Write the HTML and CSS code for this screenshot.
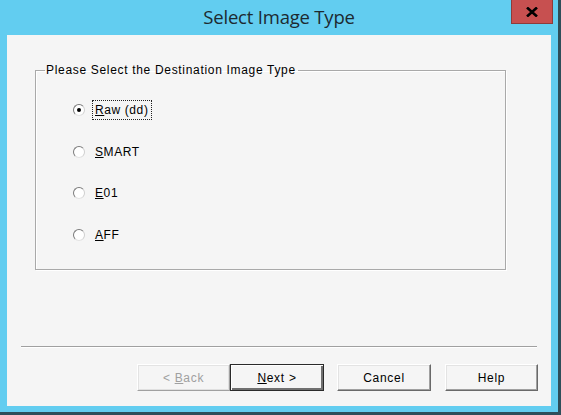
FILE: index.html
```html
<!DOCTYPE html>
<html>
<head>
<meta charset="utf-8">
<link rel="stylesheet" href="styles.css">
</head>
<body>
<div class="window">
  <div class="titlebar">
    <div class="title-spacer"></div>
    <div class="title">Select Image Type</div>
    <div class="title-right"><div class="close">
      <svg width="12" height="10" viewBox="0 0 12 10"><path d="M1 0.5 L11 9.5 M11 0.5 L1 9.5" stroke="#000" stroke-width="2.6"/></svg>
    </div></div>
  </div>
  <div class="client">
    <fieldset class="group">
      <legend class="legend">Please Select the Destination Image Type</legend>
      <div class="options">
        <div class="option"><span class="radio checked"></span><span class="label focus"><u>R</u>aw (dd)</span></div>
        <div class="option"><span class="radio"></span><span class="label"><u>S</u>MART</span></div>
        <div class="option"><span class="radio"></span><span class="label"><u>E</u>01</span></div>
        <div class="option"><span class="radio"></span><span class="label"><u>A</u>FF</span></div>
      </div>
    </fieldset>
    <div class="fill"></div>
    <div class="separator"></div>
    <div class="buttons">
      <div class="btn disabled"><span>&lt; <u>B</u>ack</span></div>
      <div class="btn default"><span><u>N</u>ext &gt;</span></div>
      <div class="btn cancel"><span>Cancel</span></div>
      <div class="btn help"><span>Help</span></div>
    </div>
  </div>
</div>
</body>
</html>
```
FILE: styles.css
```css
html, body {
  margin: 0;
  padding: 0;
}
body {
  width: 561px;
  height: 415px;
  overflow: hidden;
  font-family: "Liberation Sans", Arial, sans-serif;
}
.window {
  box-sizing: border-box;
  width: 561px;
  height: 415px;
  background: #62cdf0;
  border-right: 3px solid #2e4e5a;
  border-bottom: 3px solid #2e4e5a;
  display: flex;
  flex-direction: column;
}
.titlebar {
  height: 35px;
  display: grid;
  grid-template-columns: 1fr auto 1fr;
  align-items: start;
}
.title {
  font-family: "Open Sans", "Noto Sans", sans-serif;
  font-size: 18.5px;
  color: #1d2a30;
  line-height: 24px;
  padding-top: 5px;
  letter-spacing: -0.2px;
  padding-left: 0;
}
.title-right {
  display: flex;
  justify-content: flex-end;
  padding-right: 5px;
}
.close {
  box-sizing: border-box;
  width: 42px;
  height: 24px;
  background: #c75050;
  border: 1px solid #8e3b3b;
  border-top: none;
  display: flex;
  align-items: center;
  justify-content: center;
}
.client {
  margin: 0 7px 0 7px;
  height: 371px;
  background: #f5f5f5;
  display: flex;
  flex-direction: column;
  font-size: 12px;
  color: #000;
}
.group {
  box-sizing: border-box;
  margin: 28px 0 0 28px;
  width: 471px;
  height: 207px;
  padding: 0;
  border: 1px solid #a9a9a9;
  box-shadow: inset 1px 1px 0 #fff, 1px 1px 0 #fff;
  min-inline-size: 0;
}
.legend {
  margin-left: 9px;
  padding: 0 2px 0 1px;
  line-height: 14px;
  letter-spacing: 0.68px;
}
.options {
  display: flex;
  flex-direction: column;
  gap: 23.5px;
  padding: 24px 0 0 37px;
}
.option {
  display: flex;
  align-items: center;
  height: 18px;
}
.radio {
  box-sizing: border-box;
  width: 12px;
  height: 12px;
  border-radius: 50%;
  border: 1px solid;
  border-color: #7a7a7a #cfcfcf #e2e2e2 #7a7a7a;
  background: #fff;
  display: flex;
  align-items: center;
  justify-content: center;
  margin-right: 8px;
}
.radio.checked::after {
  content: "";
  width: 4px;
  height: 4px;
  border-radius: 50%;
  background: #000;
}
.label {
  line-height: 16px;
  padding: 0 2px;
  letter-spacing: 0.6px;
}
.label.focus {
  outline: 1px dotted #222;
  padding: 1px 2px;
}
.fill {
  flex: 1;
}
.separator {
  margin: 0 14px;
  height: 1px;
  background: #a0a0a0;
  border-bottom: 1px solid #fff;
}
.buttons {
  display: flex;
  justify-content: flex-end;
  padding: 16px 13px 15px 0;
}
.btn {
  box-sizing: border-box;
  width: 94px;
  height: 27px;
  display: flex;
  align-items: center;
  justify-content: center;
  background: #f5f5f5;
  border: 1px solid;
  border-color: #fff #696969 #696969 #fff;
  box-shadow: inset -1px -1px 0 #a0a0a0, inset 1px 1px 0 #e3e3e3;
  letter-spacing: 0.7px;
}
.btn.disabled {
  width: 93px;
  color: #a0a0a0;
  border-color: #fff #a0a0a0 #a0a0a0 #fff;
  box-shadow: inset -1px -1px 0 #e0e0e0, inset 1px 1px 0 #e3e3e3;
}
.btn.default {
  border: 1px solid #2a2a2a;
  box-shadow: inset 1px 1px 0 #fff, inset -2px -2px 0 #707070;
}
.btn.cancel {
  margin-left: 13px;
}
.btn.help {
  margin-left: 14px;
  width: 93px;
}
```
